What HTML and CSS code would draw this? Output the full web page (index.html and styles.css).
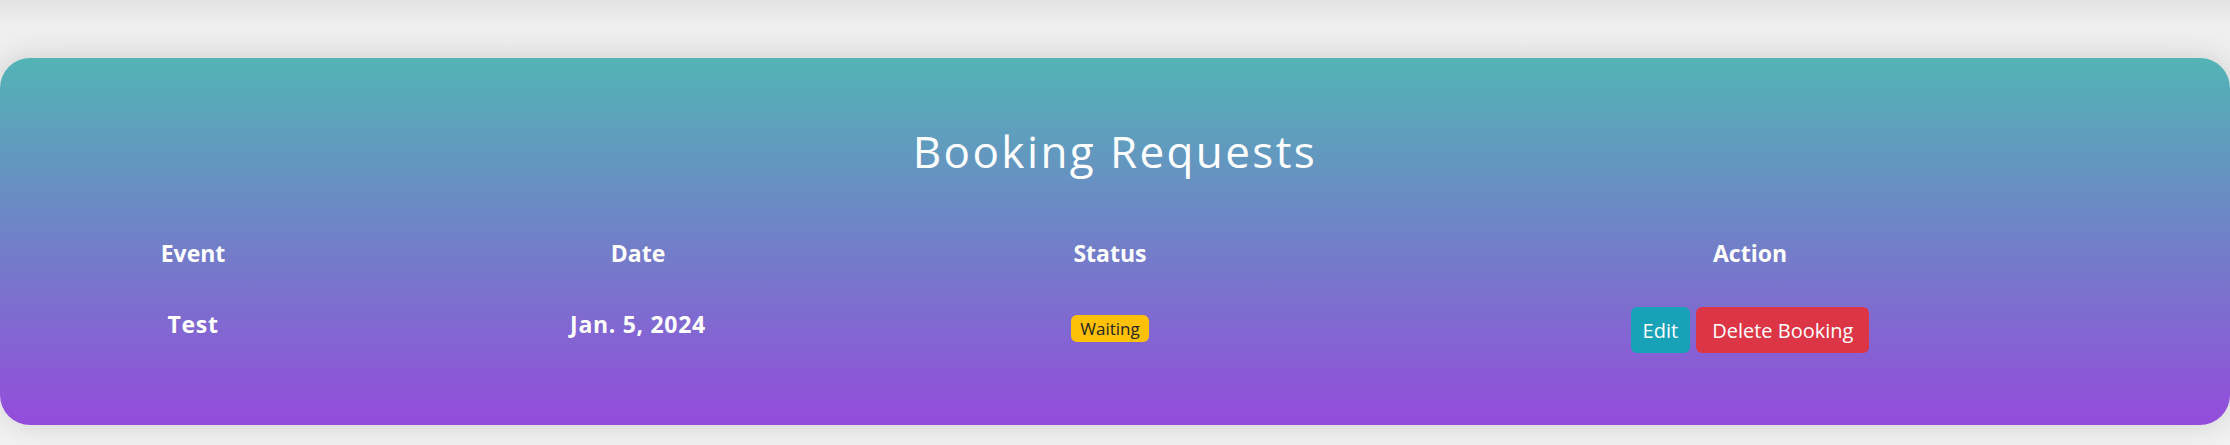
FILE: index.html
```html
<!DOCTYPE html>
<html lang="en">
<head>
<meta charset="utf-8">
<title>Booking Requests</title>
<link rel="stylesheet" href="styles.css">
</head>
<body>
<main class="page">
  <section class="card">
    <h1 class="title">Booking Requests</h1>
    <div class="table">
      <div class="row head">
        <div class="cell">Event</div>
        <div class="cell">Date</div>
        <div class="cell">Status</div>
        <div class="cell">Action</div>
      </div>
      <div class="row body">
        <div class="cell text">Test</div>
        <div class="cell text">Jan. 5, 2024</div>
        <div class="cell"><span class="badge">Waiting</span></div>
        <div class="cell actions">
          <button class="btn btn-info">Edit</button>
          <button class="btn btn-danger">Delete Booking</button>
        </div>
      </div>
    </div>
  </section>
</main>
</body>
</html>
```

FILE: styles.css
```css
* { box-sizing: border-box; }

html, body { margin: 0; }

body {
  font-family: "Open Sans", "Noto Sans", sans-serif;
  background: linear-gradient(to bottom, #e2e2e2 0, #efefef 24px, #f2f2f2 100%);
  min-height: 445px;
}

.page {
  padding-top: 58px;
}

.card {
  background: linear-gradient(to bottom, #52b4b5 0%, #7180c8 50%, #944cdc 100%);
  border-radius: 30px;
  box-shadow: 0 0 30px rgba(0, 0, 0, 0.14);
  padding: 67px 30px 72px;
  color: #fff;
}

.title {
  margin: 0 0 62px;
  text-align: center;
  font-size: 44px;
  line-height: 52px;
  font-weight: 400;
  letter-spacing: 2.4px;
}

.row {
  display: grid;
  grid-template-columns: 326fr 564fr 380fr 900fr;
  align-items: start;
}

.cell {
  display: flex;
  justify-content: center;
}

.head .cell {
  font-size: 23px;
  line-height: 28px;
  font-weight: 700;
}

.body {
  margin-top: 33px;
}

.body .text {
  padding-top: 10px;
  font-size: 23px;
  line-height: 28px;
  font-weight: 700;
  letter-spacing: 0.7px;
}

.badge {
  margin-top: 15px;
  display: inline-flex;
  align-items: center;
  height: 27px;
  padding: 0 9px;
  background: #ffc107;
  color: #212529;
  border-radius: 6px;
  font-size: 17px;
  font-weight: 500;
}

.actions {
  gap: 6px;
  padding-top: 7px;
}

.btn {
  height: 46px;
  padding: 0 12px;
  border: 0;
  border-radius: 6px;
  color: #fff;
  font-family: inherit;
  font-size: 20px;
  font-weight: 400;
}

.btn-info { background: #17a2b8; }
.btn-danger { background: #dc3545; padding: 0 16px; }
```
